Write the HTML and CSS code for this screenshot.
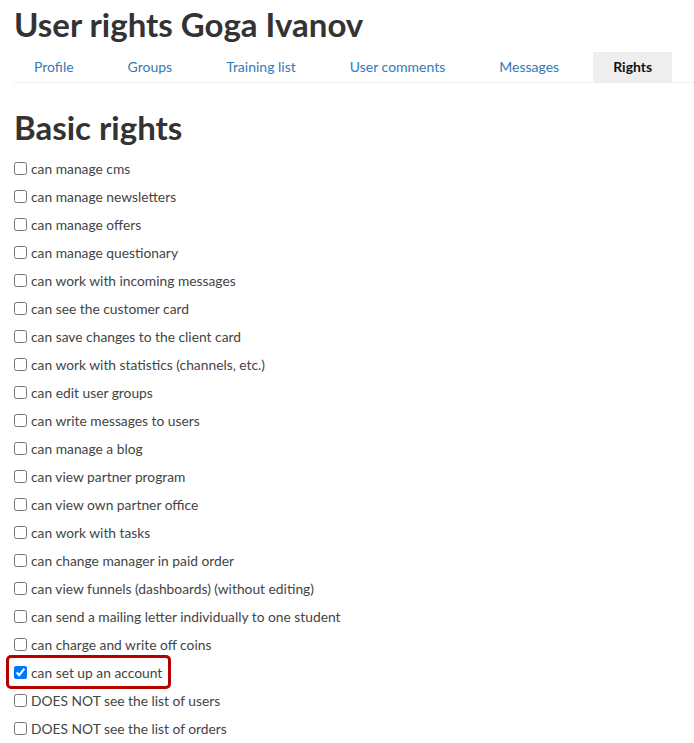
FILE: index.html
```html
<!DOCTYPE html>
<html lang="en">
<head>
<meta charset="UTF-8">
<meta name="viewport" content="width=device-width, initial-scale=1.0">
<title>User rights Goga Ivanov</title>
<link rel="stylesheet" href="styles.css">
</head>
<body>

<div class="page">
    <h1>User rights Goga Ivanov</h1>

    <ul class="tabs">
        <li><a href="#">Profile</a></li>
        <li><a href="#">Groups</a></li>
        <li><a href="#">Training list</a></li>
        <li><a href="#">User comments</a></li>
        <li><a href="#">Messages</a></li>
        <li class="active"><a href="#">Rights</a></li>
    </ul>

    <h2>Basic rights</h2>

    <form class="rights">
        <label class="right"><input type="checkbox"> can manage cms</label>
        <label class="right"><input type="checkbox"> can manage newsletters</label>
        <label class="right"><input type="checkbox"> can manage offers</label>
        <label class="right"><input type="checkbox"> can manage questionary</label>
        <label class="right"><input type="checkbox"> can work with incoming messages</label>
        <label class="right"><input type="checkbox"> can see the customer card</label>
        <label class="right"><input type="checkbox"> can save changes to the client card</label>
        <label class="right"><input type="checkbox"> can work with statistics (channels, etc.)</label>
        <label class="right"><input type="checkbox"> can edit user groups</label>
        <label class="right"><input type="checkbox"> can write messages to users</label>
        <label class="right"><input type="checkbox"> can manage a blog</label>
        <label class="right"><input type="checkbox"> can view partner program</label>
        <label class="right"><input type="checkbox"> can view own partner office</label>
        <label class="right"><input type="checkbox"> can work with tasks</label>
        <label class="right"><input type="checkbox"> can change manager in paid order</label>
        <label class="right"><input type="checkbox"> can view funnels (dashboards) (without editing)</label>
        <label class="right"><input type="checkbox"> can send a mailing letter individually to one student</label>
        <label class="right"><input type="checkbox"> can charge and write off coins</label>
        <label class="right highlight"><input type="checkbox" checked> can set up an account</label>
        <label class="right"><input type="checkbox"> DOES NOT see the list of users</label>
        <label class="right"><input type="checkbox"> DOES NOT see the list of orders</label>
    </form>
</div>

</body>
</html>
```

FILE: styles.css
```css
body {
    font-family: Lato, "Open Sans", sans-serif;
    margin: 0;
    padding: 0;
    color: #333;
}
.page {
    padding: 0 0 0 14px;
}
h1 {
    font-size: 33px;
    font-weight: bold;
    margin: 0;
    padding-top: 4px;
    line-height: 40px;
    color: #333;
}
.tabs {
    display: flex;
    list-style: none;
    margin: 8px 0 0 0;
    padding: 0;
    border-bottom: 1px solid #eee;
}
.tabs li {
    margin-right: 14px;
}
.tabs a {
    display: block;
    padding: 0 20px;
    line-height: 30px;
    font-size: 14px;
    color: #337ab7;
    text-decoration: none;
}
.tabs .active a {
    background-color: #eee;
    color: #111;
    font-weight: bold;
}
h2 {
    font-size: 33px;
    font-weight: bold;
    margin: 24px 0 7px 0;
    line-height: 40px;
    color: #333;
}
.rights {
    display: flex;
    flex-direction: column;
    align-items: flex-start;
}
.right {
    display: inline-flex;
    align-items: center;
    height: 28px;
    font-size: 13.8px;
    color: #444;
}
.right input {
    margin: 0 4px 0 0;
    width: 13px;
    height: 13px;
}
.highlight {
    box-sizing: border-box;
    padding: 0 6px 0 5px;
    margin: 0 -6px 0 -5px;
    outline: 3px solid #b80000;
    border-radius: 2px;
}
```
